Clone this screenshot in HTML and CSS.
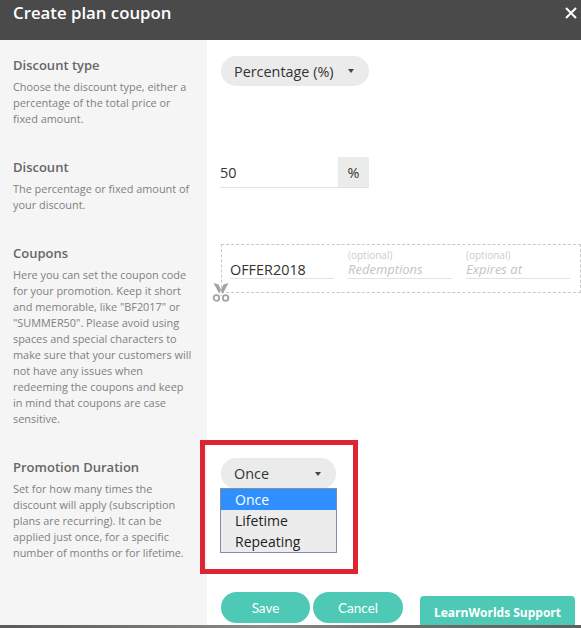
FILE: index.html
```html
<!DOCTYPE html>
<html lang="en">
  <head>
    <meta charset="UTF-8" />
    <title>Create plan coupon</title>
    <link rel="stylesheet" href="styles.css">
  </head>
  <body>
    <div class="modal">
      <div class="modal-header">
        <h1>Create plan coupon</h1>
        <svg class="close-icon" width="12" height="12" viewBox="0 0 12 12">
          <path d="M1 1 L11 11 M11 1 L1 11" stroke="#fff" stroke-width="2" fill="none" />
        </svg>
      </div>

      <div class="row row-type">
        <div class="label">
          <h2>Discount type</h2>
          <p>Choose the discount type, either a<br />percentage of the total price or<br />fixed amount.</p>
        </div>
        <div class="field">
          <div class="pill-select pill-wide">
            <span>Percentage (%)</span>
            <span class="caret"></span>
          </div>
        </div>
      </div>

      <div class="row row-discount">
        <div class="label">
          <h2>Discount</h2>
          <p>The percentage or fixed amount of<br />your discount.</p>
        </div>
        <div class="field">
          <div class="amount">
            <span class="amount-value">50</span>
            <span class="amount-unit">%</span>
          </div>
        </div>
      </div>

      <div class="row row-coupons">
        <div class="label">
          <h2>Coupons</h2>
          <p>Here you can set the coupon code<br />for your promotion. Keep it short<br />and memorable, like "BF2017" or<br />"SUMMER50". Please avoid using<br />spaces and special characters to<br />make sure that your customers will<br />not have any issues when<br />redeeming the coupons and keep<br />in mind that coupons are case<br />sensitive.</p>
        </div>
        <div class="field">
          <div class="coupon-box">
            <div class="coupon-field">
              <span class="coupon-code">OFFER2018</span>
            </div>
            <div class="coupon-field">
              <small>(optional)</small>
              <span class="coupon-hint">Redemptions</span>
            </div>
            <div class="coupon-field">
              <small>(optional)</small>
              <span class="coupon-hint">Expires at</span>
            </div>
            <svg class="scissors" width="18" height="19" viewBox="0 0 18 19">
              <path d="M1.5 0 L6.5 1.5 L11 11 L8.5 13 Z M16.5 0 L11.5 1.5 L7 11 L9.5 13 Z" fill="#a3a3a3" />
              <circle cx="4.4" cy="15" r="2.8" stroke="#a3a3a3" stroke-width="1.8" fill="none" />
              <circle cx="13.6" cy="15" r="2.8" stroke="#a3a3a3" stroke-width="1.8" fill="none" />
            </svg>
          </div>
        </div>
      </div>

      <div class="row row-duration">
        <div class="label">
          <h2>Promotion Duration</h2>
          <p>Set for how many times the<br />discount will apply (subscription<br />plans are recurring). It can be<br />applied just once, for a specific<br />number of months or for lifetime.</p>
        </div>
        <div class="field">
          <div class="pill-select pill-narrow">
            <span>Once</span>
            <span class="caret"></span>
            <ul class="options">
              <li class="selected">Once</li>
              <li>Lifetime</li>
              <li>Repeating</li>
            </ul>
          </div>
        </div>
      </div>

      <div class="row row-footer">
        <div class="label"></div>
        <div class="buttons">
          <button class="button">Save</button>
          <button class="button button-cancel">Cancel</button>
        </div>
      </div>

      <div class="highlight"></div>
      <div class="support-tab">LearnWorlds Support</div>
    </div>
    <div class="page-strip"></div>
  </body>
</html>
```

FILE: styles.css
```css
:root {
  --header-bg: #4a4a4a;
  --side-bg: #f5f5f5;
  --pill-bg: #ebebeb;
  --teal: #4dc9b5;
  --text-dark: #333333;
  --text-label: #666666;
  --text-muted: #808080;
  --line: #e3e3e3;
}

* {
  box-sizing: border-box;
  margin: 0;
  padding: 0;
}

html,
body {
  height: 628px;
  overflow: hidden;
  background-color: #ffffff;
}

body {
  font-family: "Open Sans", "Noto Sans", sans-serif;
  color: var(--text-dark);
}

.modal {
  position: relative;
  height: 628px;
}

.modal-header {
  display: flex;
  justify-content: space-between;
  height: 40px;
  padding: 1px 4px 0 13px;
  background-color: var(--header-bg);
}

.modal-header h1 {
  font-size: 16.8px;
  line-height: 24px;
  font-weight: 600;
  color: #ffffff;
}

.close-icon {
  margin-top: 6px;
}

.row {
  display: grid;
  grid-template-columns: 207px 1fr;
}

.row-type {
  height: 116px;
}

.row-discount {
  height: 86px;
}

.row-coupons {
  height: 214px;
}

.row-duration {
  height: 134px;
}

.row-footer {
  height: 38px;
}

.label {
  padding: 14px 10px 0 13px;
  background-color: var(--side-bg);
}

.row-discount .label,
.row-coupons .label,
.row-duration .label {
  padding-top: 0;
}

.label h2 {
  font-size: 13px;
  line-height: 22px;
  font-weight: 600;
  color: var(--text-label);
}

.label p {
  margin-top: 3px;
  font-size: 10.9px;
  line-height: 16px;
  white-space: nowrap;
  color: var(--text-muted);
}

.field {
  padding-left: 14px;
}

.row-type .field {
  padding-top: 16px;
}

.row-discount .field {
  padding-top: 1px;
}

.row-coupons .field {
  padding-top: 2px;
}

.row-duration .field {
  padding-top: 2px;
}

.pill-select {
  position: relative;
  display: flex;
  align-items: center;
  justify-content: space-between;
  height: 30px;
  padding: 0 15px 0 13px;
  border-radius: 15px;
  background-color: var(--pill-bg);
  font-size: 14.4px;
}

.pill-wide {
  width: 148px;
}

.pill-narrow {
  width: 115px;
  height: 31px;
}

.caret {
  width: 0;
  height: 0;
  border-left: 3.5px solid transparent;
  border-right: 3.5px solid transparent;
  border-top: 4px solid #444444;
}

.amount {
  display: flex;
  width: 149px;
  height: 31px;
  margin-left: -1px;
  border-bottom: 1px solid var(--line);
}

.amount-value {
  flex: 1;
  font-size: 14.4px;
  line-height: 32px;
}

.amount-unit {
  width: 31px;
  background-color: var(--pill-bg);
  font-size: 14.4px;
  line-height: 32px;
  text-align: center;
}

.coupon-box {
  position: relative;
  display: flex;
  gap: 14px;
  width: 360px;
  height: 49px;
  padding: 0 8px;
  border: 1px dashed #c8c8c8;
}

.coupon-field {
  display: flex;
  flex-direction: column;
  justify-content: flex-end;
  width: 104px;
  height: 34px;
  border-bottom: 1px solid var(--line);
}

.coupon-field small {
  font-size: 10px;
  line-height: 11px;
  color: #cccccc;
}

.coupon-code {
  font-size: 14.4px;
  line-height: 17px;
}

.coupon-hint {
  font-size: 13px;
  line-height: 17px;
  font-style: italic;
  color: #c4c4c4;
}

.scissors {
  position: absolute;
  left: -10px;
  bottom: -10px;
}

.options {
  position: absolute;
  top: 30px;
  left: -1px;
  width: 117px;
  height: 65px;
  border: 1px solid #7f8fa9;
  background-color: #ececec;
  list-style: none;
}

.options li {
  height: 21px;
  padding-left: 14px;
  font-size: 14px;
  line-height: 21px;
  color: #222222;
}

.options .selected {
  background-color: #2f8fff;
  color: #ffffff;
}

.buttons {
  display: flex;
  gap: 3px;
  padding: 2px 0 0 14px;
}

.button {
  width: 89px;
  height: 31px;
  border: none;
  border-radius: 16px;
  background-color: var(--teal);
  color: #ffffff;
  font-family: "Lato", sans-serif;
  font-size: 13.5px;
}

.button-cancel {
  width: 90px;
}

.highlight {
  position: absolute;
  top: 440px;
  left: 200px;
  width: 158px;
  height: 134px;
  border: 5px solid #dc2433;
}

.support-tab {
  position: absolute;
  left: 420px;
  top: 596px;
  width: 155px;
  height: 32px;
  border-radius: 4px 4px 0 0;
  background-color: var(--teal);
  color: #ffffff;
  font-size: 12px;
  font-weight: 700;
  line-height: 34px;
  text-align: center;
}

.page-strip {
  position: absolute;
  left: 0;
  right: 0;
  bottom: 0;
  height: 3px;
  background: linear-gradient(90deg, #5a5a5a, #8a8a86 45%, #6e6e6c 70%, #5f5f5d);
}
```
